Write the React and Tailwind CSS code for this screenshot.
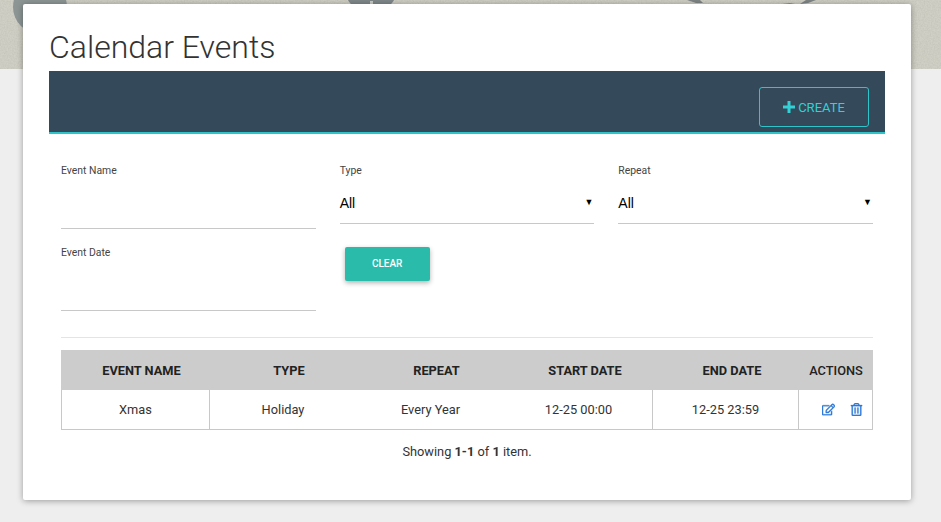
import { FaRegEdit, FaRegTrashAlt } from 'react-icons/fa';

const inputLabel = 'block text-[10.4px] leading-[13px] text-[#444]';

const TextFilter = ({ label }) => (
  <div className="h-[82px]">
    <label className={inputLabel}>{label}</label>
    <div className="mt-[5px] h-[47px] border-b border-[#c8c8c8]" />
  </div>
);

const SelectFilter = ({ label }) => (
  <div className="h-[82px]">
    <label className={inputLabel}>{label}</label>
    <div className="mt-[5px] flex h-[42px] items-center justify-between border-b border-[#c8c8c8] pt-[1px] font-['Liberation_Sans',sans-serif] text-[14px] text-black">
      <span>All</span>
      <span className="pr-[1px] text-[9px]">▼</span>
    </div>
  </div>
);

const Header = ({ children, className = 'pl-[12px] font-bold' }) => (
  <th className={`h-[40px] bg-[#cccccc] p-0 pt-[1px] text-center text-[12.8px] text-[#222] ${className}`}>
    {children}
  </th>
);

const Cell = ({ children, className = '' }) => (
  <td className={`h-[40px] border-b border-[#c8c8c8] p-0 text-center text-[12.8px] text-[#333] ${className}`}>
    {children}
  </td>
);

// blurred photo behind the page header, only its edges show around the card
const HeaderPhoto = () => (
  <svg className="absolute left-0 top-0" width="941" height="69" viewBox="0 0 941 69">
    <filter id="grain">
      <feTurbulence type="fractalNoise" baseFrequency="0.7" numOctaves="2" seed="4" />
      <feColorMatrix values="0 0 0 0 0.45  0 0 0 0 0.45  0 0 0 0 0.4  0 0 0 0.9 -0.25" />
    </filter>
    <rect width="941" height="69" fill="#d0d0c6" />
    <rect width="941" height="69" filter="url(#grain)" opacity="0.7" />
    <circle cx="40" cy="7" r="27" fill="#8c9494" />
    <circle cx="371" cy="-14" r="27" fill="#7f8788" />
    <rect x="370" y="1" width="3" height="3" fill="#c8cac6" />
    <path d="M687 0 L700 0 L703 3 L696 3 Z" fill="#7d8483" />
    <path d="M782 4 L790 3 L795 4 Z" fill="#8a8f8c" />
    <path d="M800 4 L806 0 L816 0 L808 3 Z" fill="#7d8483" />
  </svg>
);

const App = () => {
  return (
    <div className="min-h-[522px] overflow-hidden bg-[#eeeeee] font-['Roboto',sans-serif]">
      <div className="relative h-[69px]">
        <HeaderPhoto />
      </div>

      <div className="relative ml-[23px] mt-[-65px] h-[496px] w-[888px] rounded-[2px] bg-white px-[26px] shadow-[0_1px_6px_rgba(0,0,0,0.35)]">
        <h1 className="pt-[22px] pb-[2px] text-[32px] font-light leading-[43px] text-[#333]">Calendar Events</h1>

        <div className="flex h-[63px] items-start justify-end border-b-2 border-[#2ec4c9] bg-[#34495a] pr-[16px] pt-[16px]">
          <button className="flex h-[40px] w-[110px] items-center justify-center rounded-[3px] border border-[#2ec4c9] text-[13px] text-[#33d0d5]">
            <svg className="mr-[3px]" width="12" height="12" viewBox="0 0 12 12" fill="#33d0d5">
              <path d="M4.5 0h3v4.5H12v3H7.5V12h-3V7.5H0v-3h4.5z" />
            </svg>
            <span className="pt-[1px]">CREATE</span>
          </button>
        </div>

        <div className="px-[12px]">
          <div className="grid grid-cols-3 gap-x-[24px] pt-[30px]">
            <TextFilter label="Event Name" />
            <SelectFilter label="Type" />
            <SelectFilter label="Repeat" />
            <TextFilter label="Event Date" />
            <div className="pl-[5px] pt-[1px]">
              <button className="h-[34px] w-[85px] rounded-[2px] bg-[#2abbab] pb-[1px] text-[10px] font-medium text-white shadow-[0_2px_5px_rgba(0,0,0,0.3)]">
                CLEAR
              </button>
            </div>
          </div>

          <div className="mt-[9px] border-t border-[#e4e4e4] pt-[12px]">
            <table className="w-full table-fixed border-separate border-spacing-0">
              <colgroup>
                <col className="w-[149px]" />
                <col className="w-[146px]" />
                <col className="w-[149px]" />
                <col className="w-[148px]" />
                <col className="w-[146px]" />
                <col className="w-[74px]" />
              </colgroup>
              <thead>
                <tr>
                  <Header>EVENT NAME</Header>
                  <Header>TYPE</Header>
                  <Header>REPEAT</Header>
                  <Header>START DATE</Header>
                  <Header>END DATE</Header>
                  <Header className="font-medium">ACTIONS</Header>
                </tr>
              </thead>
              <tbody>
                <tr>
                  <Cell className="border-l border-r">Xmas</Cell>
                  <Cell>Holiday</Cell>
                  <Cell>Every Year</Cell>
                  <Cell className="border-r">12-25 00:00</Cell>
                  <Cell className="border-r">12-25 23:59</Cell>
                  <Cell className="border-r">
                    <span className="flex items-center justify-center gap-[15px] pl-[14px] text-[13px] text-[#2f7ad6]">
                      <FaRegEdit stroke="currentColor" strokeWidth={14} />
                      <FaRegTrashAlt stroke="currentColor" strokeWidth={10} />
                    </span>
                  </Cell>
                </tr>
              </tbody>
            </table>
            <p className="mt-[12px] text-center text-[12.8px] text-[#333]">
              Showing <b>1-1</b> of <b>1</b> item.
            </p>
          </div>
        </div>
      </div>
    </div>
  );
};

export default App;
